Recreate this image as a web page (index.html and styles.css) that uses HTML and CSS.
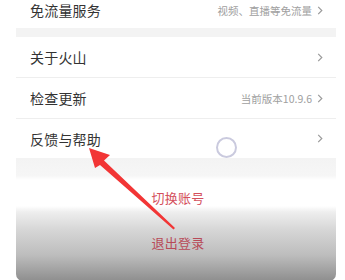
FILE: index.html
```html
<!DOCTYPE html>
<html lang="zh">
<head>
<meta charset="utf-8">
<link rel="stylesheet" href="styles.css">
</head>
<body>
<div class="screen">
  <div class="row row-first">
    <span class="label">免流量服务</span>
    <span class="extra">视频、直播等免流量<svg class="chev" viewBox="0 0 6 10"><path d="M1 1 L5 5 L1 9" fill="none" stroke="#9a9a9a" stroke-width="1.3"/></svg></span>
  </div>
  <div class="band"></div>
  <div class="row">
    <span class="label">关于火山</span>
    <span class="extra"><svg class="chev" viewBox="0 0 6 10"><path d="M1 1 L5 5 L1 9" fill="none" stroke="#9a9a9a" stroke-width="1.3"/></svg></span>
  </div>
  <div class="line"></div>
  <div class="row">
    <span class="label">检查更新</span>
    <span class="extra">当前版本10.9.6<svg class="chev" viewBox="0 0 6 10"><path d="M1 1 L5 5 L1 9" fill="none" stroke="#9a9a9a" stroke-width="1.3"/></svg></span>
  </div>
  <div class="line"></div>
  <div class="row row-last">
    <span class="label">反馈与帮助</span>
    <span class="extra"><svg class="chev" viewBox="0 0 6 10"><path d="M1 1 L5 5 L1 9" fill="none" stroke="#9a9a9a" stroke-width="1.3"/></svg></span>
  </div>
  <div class="band band-tall"></div>
  <div class="sheet">
    <div class="sheet-item switch">切换账号</div>
    <div class="sheet-item logout">退出登录</div>
  </div>
</div>
<div class="touch"></div>
<svg class="arrow" width="345" height="280" viewBox="0 0 345 280">
  <polygon points="89,148 110,155 104,160.5 175,228 173.5,229.5 100,165 95,168" fill="#f23535"/>
</svg>
</body>
</html>
```
FILE: styles.css
```css
html, body {
  margin: 0;
  padding: 0;
  background: #ffffff;
}
body {
  width: 345px;
  height: 280px;
  overflow: hidden;
  position: relative;
  font-family: "Noto Sans CJK SC", "Noto Sans", sans-serif;
}
.screen {
  margin-left: 16px;
  width: 320px;
  display: flex;
  flex-direction: column;
}
.row {
  height: 40px;
  display: flex;
  align-items: center;
  justify-content: space-between;
  padding: 0 13px 0 14px;
}
.row-first {
  height: 20px;
  padding-bottom: 8px;
}
.row-last {
  height: 39px;
}
.label {
  font-size: 14px;
  color: #333333;
  letter-spacing: 0.2px;
}
.extra {
  display: flex;
  align-items: center;
  font-size: 10.5px;
  color: #a0a0a0;
}
.chev {
  width: 6px;
  height: 9px;
  margin-left: 5px;
}
.band {
  height: 9px;
  background: #f3f3f3;
}
.band-tall {
  height: 22px;
  background: linear-gradient(#f3f3f3, #f6f6f6 80%, #ffffff);
}
.line {
  height: 1px;
  background: #eeeeee;
}
.sheet {
  height: 101px;
  display: flex;
  flex-direction: column;
  border-radius: 0 0 7px 7px;
  background: linear-gradient(#ffffff 0px, #ffffff 26px, #eeeeee 32px, #d6d6d6 50px, #bdbdbd 75px, #8e8e8e 101px);
}
.sheet-item {
  display: flex;
  align-items: center;
  justify-content: center;
  font-size: 13px;
  letter-spacing: 0.3px;
}
.switch {
  height: 34px;
  color: #d4505c;
  padding-left: 4px;
}
.logout {
  height: 52px;
  margin-top: 2px;
  color: #b84a58;
  padding-left: 4px;
}
.touch {
  position: absolute;
  left: 216px;
  top: 137px;
  width: 17px;
  height: 17px;
  border: 2px solid #cacade;
  border-radius: 50%;
}
.arrow {
  position: absolute;
  left: 0;
  top: 0;
}
```
